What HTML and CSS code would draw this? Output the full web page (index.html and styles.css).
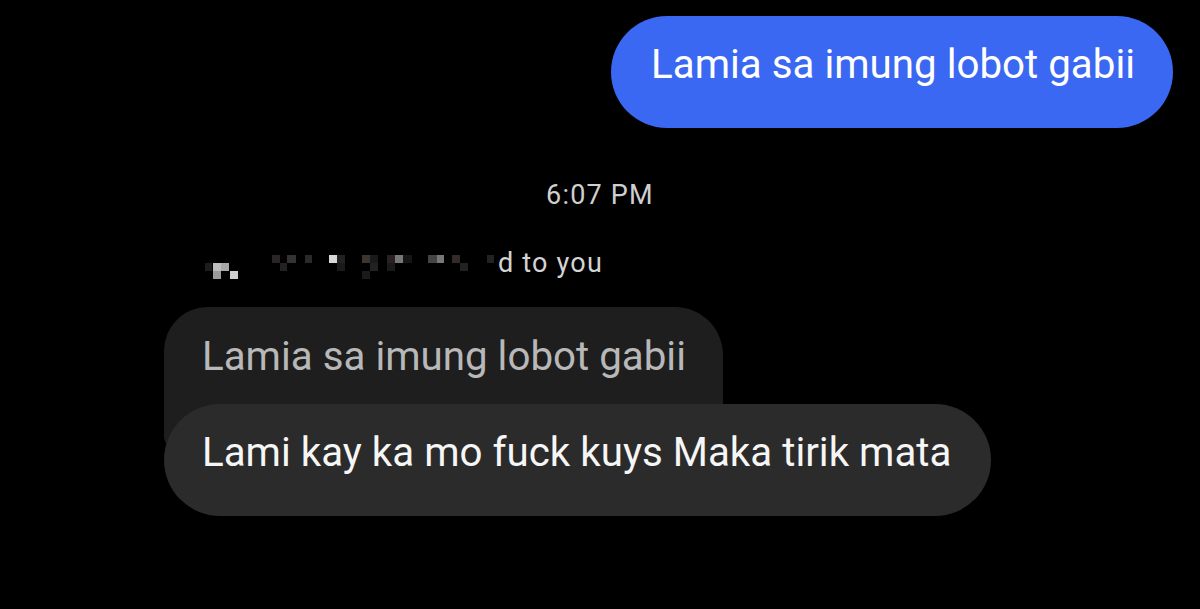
FILE: index.html
```html
<!DOCTYPE html>
<html lang="en">
<head>
<meta charset="utf-8">
<title>Chat</title>
<link rel="stylesheet" href="styles.css">
</head>
<body>
<main class="chat">
  <div class="bubble bubble-out">Lamia sa imung lobot gabii</div>
  <div class="timestamp">6:07 PM</div>
  <div class="reply-note">
    <svg class="censor" width="293" height="34" viewBox="0 0 293 34" aria-hidden="true">
      <rect x="67" y="8" width="8" height="8" fill="#2a2525"/>
      <rect x="82" y="8" width="9" height="8" fill="#333"/>
      <rect x="100" y="8" width="7" height="8" fill="#2a2a2a"/>
      <rect x="124" y="8" width="8" height="8" fill="#d8d8d8"/>
      <rect x="132" y="8" width="8" height="8" fill="#222"/>
      <rect x="157" y="8" width="8" height="8" fill="#3a3530"/>
      <rect x="165" y="8" width="8" height="8" fill="#1a1a1a"/>
      <rect x="182" y="8" width="8" height="8" fill="#2a2222"/>
      <rect x="190" y="8" width="8" height="8" fill="#777"/>
      <rect x="198" y="8" width="9" height="8" fill="#151515"/>
      <rect x="223" y="8" width="9" height="8" fill="#444"/>
      <rect x="232" y="8" width="7" height="8" fill="#777"/>
      <rect x="247" y="8" width="8" height="8" fill="#332a2a"/>
      <rect x="282" y="8" width="7" height="8" fill="#222"/>
      <rect x="0" y="16" width="7" height="8" fill="#1c1c1c"/>
      <rect x="8" y="16" width="8" height="8" fill="#bdbdbd"/>
      <rect x="16" y="16" width="8" height="8" fill="#a8a8a8"/>
      <rect x="75" y="16" width="7" height="8" fill="#222"/>
      <rect x="132" y="16" width="8" height="8" fill="#1a1a1a"/>
      <rect x="165" y="16" width="8" height="8" fill="#222"/>
      <rect x="182" y="16" width="8" height="8" fill="#1a1a1a"/>
      <rect x="255" y="16" width="8" height="8" fill="#222"/>
      <rect x="8" y="24" width="8" height="8" fill="#9a9a9a"/>
      <rect x="25" y="24" width="8" height="8" fill="#cfcfcf"/>
      <rect x="157" y="24" width="8" height="8" fill="#1a1a1a"/>
    </svg>
    <span class="reply-text">d to you</span>
  </div>
  <div class="thread">
    <div class="bubble bubble-quote">Lamia sa imung lobot gabii</div>
    <div class="bubble bubble-in">Lami kay ka mo fuck kuys Maka tirik mata</div>
  </div>
</main>
</body>
</html>
```
FILE: styles.css
```css
html, body {
  margin: 0;
  padding: 0;
  background: #000;
  height: 100%;
  overflow: hidden;
}

.chat {
  display: flex;
  flex-direction: column;
  padding-top: 16px;
  font-family: Roboto, "Liberation Sans", sans-serif;
}

.bubble {
  font-size: 40.3px;
  line-height: 48px;
  white-space: nowrap;
  box-sizing: border-box;
}

.bubble-out {
  align-self: flex-end;
  margin-right: 27px;
  background: #3a68f2;
  color: #fff;
  padding: 25px 38px 39px 40px;
  border-radius: 56px;
}

.timestamp {
  margin-top: 51px;
  text-align: center;
  font-size: 27px;
  line-height: 32px;
  letter-spacing: 1.2px;
  color: #cfcfcf;
}

.reply-note {
  display: flex;
  align-items: flex-start;
  margin-top: 36px;
  padding-left: 205px;
  font-size: 27px;
  line-height: 32px;
  letter-spacing: 1.2px;
  color: #d4d4d4;
}

.censor {
  display: block;
  flex: none;
}

.thread {
  display: flex;
  flex-direction: column;
  align-items: flex-start;
  margin-top: 26px;
  padding-left: 164px;
}

.bubble-quote {
  background: #1e1e1e;
  color: #b8b8b8;
  padding: 26px 37px 66px 38px;
  border-radius: 44px 48px 10px 10px;
}

.bubble-in {
  position: relative;
  margin-top: -43px;
  background: #2b2b2b;
  color: #f6f6f6;
  padding: 25px 40px 39px 38px;
  border-radius: 56px;
}
```
